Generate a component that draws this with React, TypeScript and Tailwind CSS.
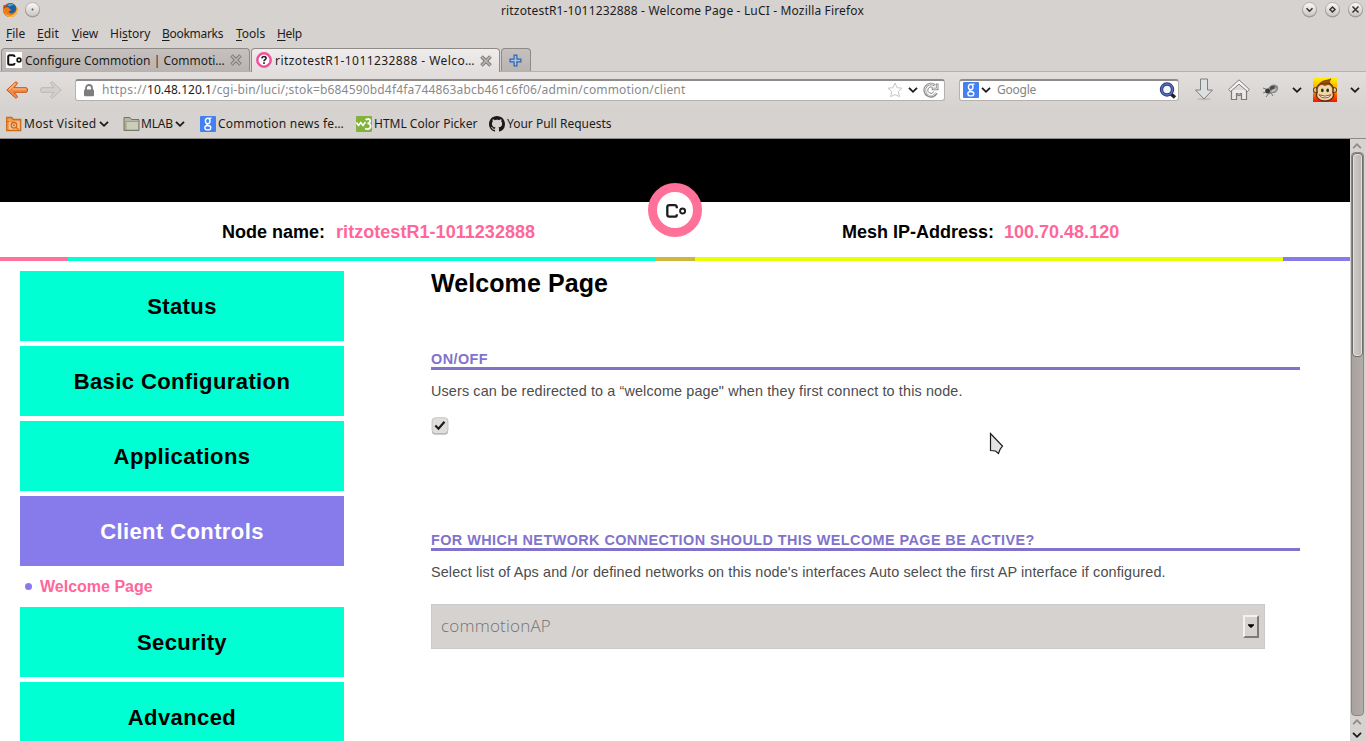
import type { ReactNode } from "react";

const UI = "font-['Noto_Sans',sans-serif] text-[12px] leading-[16px] whitespace-pre text-[#1c1c1c]";

function Chevron({ className = "", color = "#1a1a1a", up = false }: { className?: string; color?: string; up?: boolean }) {
  return (
    <svg className={`shrink-0 ${className}`} width="10" height="8" viewBox="0 0 10 8" fill="none">
      <path d={up ? "M1.2 6.200 5 2.200 8.800 6.200" : "M1 1.800 5 5.800 9 1.800"} stroke={color} strokeWidth="1.8" />
    </svg>
  );
}

function Firefox() {
  return (
    <svg width="16" height="16" viewBox="0 0 16 16" className="mt-px shrink-0">
      <circle cx="8" cy="8" r="7" fill="#e0661a" />
      <circle cx="8.6" cy="6.6" r="5.6" fill="#1f5f9f" />
      <path d="M5 3.5C6.5 1.5 10 1 12 3c-2 0-3 1-4.500 1.500Z" fill="#4aa3d8" />
      <path d="M1.800 2.600C.2 6 .6 10.500 3.500 13.300c3 2.600 8 2.300 10.500-.8 1.800-2.300 2-5.500.8-8-.1 3-1.500 6.500-4.500 6.900-2.500.2-4-1-3.500-2.300 1.500.2 2-.7 2.600-1.300-1.500-.6-2.200-1.400-2.600-2.300l-2.600-.6Z" fill="#ee7a1b" />
      <path d="M14.800 4.500c.6 3-.5 7-4 8.600-3 1.300-6.500.2-8-2.300 1.500 4.200 7 5.300 10.200 2.500 2.300-2 2.900-5.800 1.800-8.800Z" fill="#f9cf3a" />
      <path d="M2 3 1.500 6.500 3.500 6 4.800 4.800Z" fill="#c8421a" />
    </svg>
  );
}

function WinButton({ children }: { children: ReactNode }) {
  return (
    <svg width="17" height="17" viewBox="0 0 17 17" className="shrink-0" fill="none">
      <defs>
        <linearGradient id="wb" x1="0" y1="0" x2="0" y2="1">
          <stop offset="0" stopColor="#fafafa" />
          <stop offset="1" stopColor="#c9c5c3" />
        </linearGradient>
      </defs>
      <circle cx="8.500" cy="9.200" r="7.300" fill="#8f8b89" />
      <circle cx="8.500" cy="8.500" r="7" fill="url(#wb)" stroke="#a09c9a" strokeWidth=".7" />
      {children}
    </svg>
  );
}

function CommotionMark({ className = "" }: { className?: string }) {
  return (
    <svg viewBox="0 0 20 14" className={className} fill="none" stroke="#1c1c1c">
      <path d="M10.800 4.200V3.200Q10.800 1.200 8.800 1.200H3.400Q1.300 1.200 1.300 3.200V10.600Q1.300 12.700 3.400 12.700H8.800Q10.800 12.700 10.800 10.700V10.200" strokeWidth="2.300" />
      <circle cx="16.600" cy="7" r="2.500" strokeWidth="1.900" />
    </svg>
  );
}

function TabMark() {
  return (
    <svg width="15" height="12" viewBox="0 0 15 12" fill="none" stroke="#111">
      <path d="M7.500 3V2.500Q7.500 1.200 6 1.200H2.700Q1.200 1.200 1.200 2.700V9.300Q1.200 10.800 2.700 10.800H6Q7.500 10.800 7.500 9.500V9" strokeWidth="2" />
      <circle cx="12" cy="6" r="1.900" strokeWidth="1.600" />
    </svg>
  );
}

function TabClose() {
  return (
    <svg width="12" height="12" viewBox="0 0 12 12" className="shrink-0">
      <path d="M1.500 1.500 10.500 10.500M10.500 1.500 1.500 10.500" stroke="#7c7976" strokeWidth="3.600" />
      <path d="M1.800 1.800 10.200 10.200M10.200 1.800 1.800 10.200" stroke="#bdb9b6" strokeWidth="1.500" />
    </svg>
  );
}

function GoogleIcon() {
  return (
    <svg width="16" height="16" viewBox="0 0 16 16" className="shrink-0" fill="none">
      <rect width="16" height="16" rx="1" fill="#4480f2" />
      <ellipse cx="7.700" cy="4.900" rx="2.300" ry="2.700" stroke="#fff" strokeWidth="1.400" />
      <path d="M9.300 2.200h2.200M7.500 7.700C6 8.500 7.300 9 8.800 9.600" stroke="#fff" strokeWidth="1.200" />
      <ellipse cx="7.800" cy="11.700" rx="3" ry="2.200" stroke="#fff" strokeWidth="1.300" />
    </svg>
  );
}

function Menu({ name, pos = 0, className }: { name: string; pos?: number; className: string }) {
  return (
    <span className={`${UI} ${className}`}>
      {name.slice(0, pos)}
      <span className="underline decoration-1 underline-offset-2">{name[pos]}</span>
      {name.slice(pos + 1)}
    </span>
  );
}

function TitleBar() {
  return (
    <div className="flex h-[22px] shrink-0 items-start pt-[1px]">
      <div className="flex w-[501px] shrink-0 gap-[6px] pl-[2px]">
        <Firefox />
        <WinButton>
          <circle cx="8.500" cy="8.500" r="1" fill="#555" />
        </WinButton>
      </div>
      <div className={`${UI} mt-[2px] grow tracking-[0.159px]`}>ritzotestR1-1011232888 - Welcome Page - LuCI - Mozilla Firefox</div>
      <div className="flex gap-[6px] pr-[2px]">
        <WinButton>
          <path d="M5.500 7.300 8.500 10.200 11.500 7.300" stroke="#333" strokeWidth="1.500" />
        </WinButton>
        <WinButton>
          <path d="M8.500 6 11 8.500 8.500 11 6 8.500Z" stroke="#333" strokeWidth="1.500" />
        </WinButton>
        <WinButton>
          <path d="M5.500 5.500 11.500 11.500M11.500 5.500 5.500 11.500" stroke="#333" strokeWidth="1.500" />
        </WinButton>
      </div>
    </div>
  );
}

function Tabs() {
  return (
    <div className="flex h-[24px] shrink-0 border-b border-[#b5b1ae] pl-[1px]">
      <div className="flex h-[23px] w-[249px] items-center rounded-t-[4px] border border-b-0 border-[#8e8a88] bg-linear-to-b from-[#c6c1bf] to-[#b9b4b2] pl-[4px]">
        <div className="flex size-4 items-center justify-center bg-white">
          <TabMark />
        </div>
        <span className={`${UI} mt-[2px] ml-[3px] w-[205px]`}>Configure Commotion | Commoti…</span>
        <TabClose />
      </div>
      <div className="-mb-px ml-px flex h-[24px] w-[249px] items-center rounded-t-[4px] border border-b-0 border-[#8e8a88] bg-linear-to-b from-[#efedec] to-[#e2dedd] pl-[4px]">
        <svg width="16" height="16" viewBox="0 0 16 16" className="mb-px shrink-0" fill="none">
          <circle cx="8" cy="8" r="6.700" fill="#fff" stroke="#f0509c" strokeWidth="2.500" />
          <path d="M5.900 6.400C6 3.900 10.200 4 10.100 6.300 10 7.600 8 7.700 8 9.300M8 10.300v1.600" stroke="#222" strokeWidth="1.600" />
        </svg>
        <span className={`${UI} ml-[3px] w-[205px] tracking-[0.429px]`}>ritzotestR1-1011232888 - Welco…</span>
        <TabClose />
      </div>
      <div className="ml-px flex h-[23px] w-[30px] items-center justify-center rounded-t-[4px] border border-b-0 border-[#8e8a88] bg-linear-to-b from-[#c6c1bf] to-[#b9b4b2]">
        <svg width="13" height="13" viewBox="0 0 13 13" className="mr-px">
          <path d="M4.500.5h4v4h4v4h-4v4h-4v-4h-4v-4h4Z" fill="#2f63ad" />
          <path d="M5.700 1.700h1.600v4h4v1.600h-4v4H5.700v-4h-4V5.700h4Z" fill="#a6c6ec" />
        </svg>
      </div>
    </div>
  );
}

function Monkey() {
  return (
    <svg width="24" height="24" viewBox="0 0 24 24" className="shrink-0">
      <defs>
        <linearGradient id="mk" x1="0" y1="0" x2="0" y2="1">
          <stop offset="0" stopColor="#fff200" />
          <stop offset=".5" stopColor="#ff9b00" />
          <stop offset="1" stopColor="#f01400" />
        </linearGradient>
      </defs>
      <rect width="24" height="24" fill="url(#mk)" />
      <circle cx="2.800" cy="12" r="2.500" fill="#e8c084" stroke="#3a1c08" strokeWidth=".8" />
      <circle cx="21.200" cy="12" r="2.500" fill="#e8c084" stroke="#3a1c08" strokeWidth=".8" />
      <path d="M4 14C2.500 8 6 4.500 12 4.500s9.500 3 8 9.500c3 5-2 9-8 9S1.500 19 4 14Z" fill="#8a5222" stroke="#3a1c08" strokeWidth=".8" />
      <path d="M5 14.500C4 9 6.500 7 9 7c1.500 0 2 1 3 1s1.500-1 3-1c2.500 0 5 2 4 7.500 2.500 4.500-2 7.700-7 7.700s-9.500-3.200-7-7.700Z" fill="#f2d7a2" />
      <path d="M7 5.500C9 2 13 3 18 .8 17 3 16 3 17 5.500Z" fill="#a04a10" stroke="#5a2408" strokeWidth=".5" />
      <ellipse cx="9.300" cy="12.300" rx="1.300" ry="1.900" fill="#14303a" />
      <ellipse cx="14.700" cy="12.300" rx="1.300" ry="1.900" fill="#14303a" />
      <path d="M6 16.700q6 3 12 0-1.500 3.300-6 3.300t-6-3.300Z" fill="#fff" stroke="#8a2c14" strokeWidth=".8" />
    </svg>
  );
}

function NavBar() {
  return (
    <div className="flex h-[37px] shrink-0 items-center bg-linear-to-b from-[#e2dedd] to-[#d6d2cf] pb-[2px]">
      <svg width="22" height="18" viewBox="0 0 22 18" className="ml-[6px] shrink-0">
        <path d="M9.500 1Q11 .5 11.500 2.500L8 6.700H20Q21.500 6.700 21.500 9T20 11.300H8l3.500 4.200Q11 17.500 9.500 17L.8 9Z" fill="#ef8b47" stroke="#c95612" />
        <path d="M3 8.800 9.500 2.500M7 8H20" stroke="#f9bb8b" strokeWidth="1.200" />
      </svg>
      <svg width="22" height="18" viewBox="0 0 22 18" className="ml-[12px] shrink-0">
        <path d="M12.500 1Q11 .5 10.500 2.500L14 6.700H2Q.5 6.700 .5 9T2 11.300H14l-3.500 4.200Q11 17.500 12.500 17L21.200 9Z" fill="#d3cfcc" stroke="#bbb7b4" />
      </svg>
      <div className="ml-[13px] flex h-[22px] w-[870px] shrink-0 items-center rounded-[3px] border border-t-2 border-[#b5b1ae] border-t-[#8f8b89] bg-white pl-[7px]">
        <svg width="12" height="13" viewBox="0 0 12 13" className="shrink-0" fill="none">
          <path d="M3 6V4a3 3 0 0 1 6 0v2" stroke="#7d7d7d" strokeWidth="1.800" />
          <rect x="1" y="5.500" width="10" height="6.800" rx="1" fill="#7d7d7d" />
        </svg>
        <span className={`${UI} ml-[7px]`}>
          <span className="tracking-[0.455px] text-[#8a8a8a]">https://</span>
          <span className="tracking-[0.04px]">10.48.120.1</span>
          <span className="tracking-[0.17px] text-[#8a8a8a]">/cgi-bin/luci/;stok=b684590bd4f4fa744863abcb461c6f06/admin/commotion/client</span>
        </span>
        <svg width="16" height="16" viewBox="0 0 16 16" className="ml-auto shrink-0" fill="none">
          <path d="m8 1 2.100 4.700 5 .5-3.800 3.400 1.100 5L8 12.600l-4.400 2 1.100-5L.9 6.200l5-.5Z" stroke="#c6c6c6" strokeLinejoin="round" />
        </svg>
        <Chevron className="ml-[5px]" />
        <svg width="16" height="16" viewBox="0 0 16 16" className="ml-[5px] mr-[5px] shrink-0" fill="none">
          <path d="M13.500 11A6.200 6.200 0 1 1 12 3.500M14.200 1.500V7H8.700" stroke="#858585" strokeWidth="2.600" />
          <path d="M13.200 10.900A6 6 0 1 1 12.300 3.800M14.200 2.300V6.900H9.500" stroke="#ededed" strokeWidth="1" />
          <path d="M10.800 9.600A3.200 3.200 0 1 1 9.500 5.300" stroke="#858585" strokeWidth="1" />
        </svg>
      </div>
      <div className="ml-[14px] flex h-[22px] w-[220px] shrink-0 items-center rounded-[3px] border border-t-2 border-[#b5b1ae] border-t-[#8f8b89] bg-white pl-[3px]">
        <GoogleIcon />
        <Chevron className="ml-[2px]" />
        <span className={`${UI} ml-[6px] tracking-[-0.25px] text-[#858585]`}>Google</span>
        <svg width="18" height="17" viewBox="0 0 18 17" className="ml-auto mr-px shrink-0" fill="none">
          <path d="m11.500 11.500 4.500 4" stroke="#222" strokeWidth="3.500" />
          <circle cx="8" cy="7.500" r="5.500" fill="#f5f6fa" stroke="#27397d" strokeWidth="3.400" />
          <circle cx="8" cy="7.500" r="5.500" stroke="#5c72be" strokeWidth="1.400" />
        </svg>
      </div>
      <svg width="20" height="23" viewBox="0 0 20 23" className="ml-[15px] shrink-0">
        <ellipse cx="10" cy="21.200" rx="7" ry="1.300" fill="#c2bebb" />
        <path d="M6.500 1h7v11h5L10 21 1.500 12h5Z" fill="#dce0e1" stroke="#7b7f7e" />
      </svg>
      <svg width="22" height="22" viewBox="0 0 22 22" className="ml-[14px] shrink-0" fill="none">
        <path d="M3.500 11v9.500h5v-6h1.500v2h2v-2h1.500v6h5V11" fill="#eceae9" stroke="#7d7b79" strokeWidth="1.200" />
        <path d="M11 .8 21.300 10.500 19.500 12.500 11 5.200 2.500 12.500.7 10.500Z" fill="#f4f3f2" stroke="#7d7b79" strokeWidth="1" />
      </svg>
      <svg width="18" height="16" viewBox="0 0 18 16" className="ml-[12px] shrink-0">
        <path d="M4 9 8 4Q13 1 16 4.500 17 9 12 11L7 12Z" fill="#8b8b8b" />
        <path d="M8 5q3-2 5-1l-1 3-4 1Z" fill="#4b4b4b" />
        <path d="M10 8 15 6l-2 3-4 1.500Z" fill="#c2c2c2" />
        <circle cx="5.500" cy="9" r="2.500" fill="#3a3a3a" />
        <path d="M4 7 1 6M4 10l-3 1M7 11l-3 4M9 11l2 3" stroke="#777" />
      </svg>
      <Chevron className="ml-[12px]" />
      <div className="ml-[11px]">
        <Monkey />
      </div>
      <Chevron className="ml-[13px]" />
    </div>
  );
}

function Bookmarks() {
  return (
    <div className="flex h-[30px] shrink-0 items-center border-b border-[#8f8b89] bg-[#d6d2cf] pl-[6px]">
      <svg width="16" height="16" viewBox="0 0 16 16" className="shrink-0" fill="none">
        <path d="M.7 14.500V1.500h5l1.500 2h7.500v11Z" fill="#f0a05a" stroke="#cf6a14" strokeWidth="1.300" />
        <path d="M1 5.500h7" stroke="#cf6a14" />
        <rect x="3" y="5.500" width="10.500" height="8" fill="#f7c595" />
        <circle cx="8" cy="9.300" r="2.800" stroke="#cf6a14" strokeWidth="1.300" />
        <circle cx="8" cy="9.300" r="1" fill="#cf6a14" />
        <path d="m10 11.300 2.500 2.200" stroke="#cf6a14" strokeWidth="1.300" />
      </svg>
      <span className={`${UI} mt-px ml-[2px] w-[75px] tracking-[0.29px]`}>Most Visited</span>
      <Chevron />
      <svg width="17" height="16" viewBox="0 0 17 16" className="ml-[14px] shrink-0">
        <path d="M1 14.500V1.500h6l1.500 2h7.500v11Z" fill="#b5b7a3" stroke="#72745f" />
        <path d="M3 14V5.500h12.500V14Z" fill="#cbcdbb" stroke="#8b8d78" strokeWidth=".7" />
      </svg>
      <span className={`${UI} mt-px ml-[1px] w-[34px] tracking-[-0.16px]`}>MLAB</span>
      <Chevron />
      <div className="ml-[15px]">
        <GoogleIcon />
      </div>
      <span className={`${UI} mt-px ml-[2px] w-[138px] tracking-[0.2px]`}>Commotion news fe…</span>
      <svg width="16" height="16" viewBox="0 0 16 16" className="shrink-0" fill="none">
        <rect width="16" height="16" rx="1" fill="#82b23c" />
        <path d="M.5 6.500 2.500 9.500 4.800 6.500 7 9.500 9.500 6" stroke="#fff" strokeWidth="1.600" />
        <path d="M9.500 3.800Q13.800 1.800 14.200 4.800 14 7.200 11.500 7.400 15 7.800 14.600 10.800 13.500 14.200 9 12.500" stroke="#fff" strokeWidth="1.800" />
      </svg>
      <span className={`${UI} mt-px ml-[2px] w-[115px]`}>HTML Color Picker</span>
      <svg width="16" height="16" viewBox="0 0 16 16" className="shrink-0">
        <path fill="#1b1817" d="M8 0C3.580 0 0 3.580 0 8c0 3.540 2.290 6.530 5.470 7.590.4.070.55-.17.55-.38v-1.490c-2.010.37-2.530-.49-2.690-.94-.09-.23-.48-.94-.82-1.130-.28-.15-.68-.52-.01-.53.63-.01 1.080.58 1.230.82.72 1.210 1.870.87 2.330.66.07-.52.28-.87.51-1.070-1.780-.2-3.640-.89-3.640-3.950 0-.87.31-1.590.82-2.150-.08-.2-.36-1.020.08-2.120 0 0 .67-.21 2.200.82.640-.18 1.320-.27 2-.27s1.360.09 2 .27c1.530-1.040 2.200-.82 2.200-.82.44 1.100.16 1.920.08 2.120.51.56.82 1.270.82 2.150 0 3.070-1.870 3.750-3.650 3.950.29.25.54.73.54 1.480v2.200c0 .21.15.46.55.38A8 8 0 0 0 16 8c0-4.420-3.580-8-8-8Z" />
      </svg>
      <span className={`${UI} mt-px ml-[2px]`}>Your Pull Requests</span>
    </div>
  );
}

function NavBlock({ label, active = false }: { label: string; active?: boolean }) {
  return (
    <a className={`flex h-[70px] shrink-0 items-center justify-center pt-[2px] text-[22px] leading-[26px] tracking-[0.4px] ${active ? "bg-[#877bec] text-white" : "bg-[#00ffd2] text-black"}`}>
      {label}
    </a>
  );
}

function Header() {
  return (
    <header className="relative shrink-0 text-[18px] leading-[22px] font-bold">
      <div className="h-[63px] bg-black" />
      <div className="flex h-[55px] pt-[19px]">
        <div className="flex w-[842px] gap-[11px] pl-[222px]">
          <span>Node name:</span>
          <span className="tracking-[0.045px] text-[#ff6699]">ritzotestR1-1011232888</span>
        </div>
        <div className="flex gap-[10px]">
          <span>Mesh IP-Address:</span>
          <span className="text-[#ff6699]">100.70.48.120</span>
        </div>
      </div>
      <div className="flex h-[4px]">
        <div className="w-[68px] bg-[#ff7198]" />
        <div className="w-[587px] bg-[#00ffd2]" />
        <div className="w-[40px] bg-[#cbb83c]" />
        <div className="w-[588px] bg-[#e8ff00]" />
        <div className="grow bg-[#877bec]" />
      </div>
      <div className="absolute top-[44px] left-[648px] flex size-[54px] items-center justify-center rounded-full border-[9px] border-[#ff7198] bg-white">
        <CommotionMark className="mt-[2px] ml-px w-[20px]" />
      </div>
    </header>
  );
}

function SectionTitle({ children }: { children: ReactNode }) {
  return <h3 className="h-[20px] border-b-[3px] border-[#8173cc] pt-px text-[14.4px] leading-[17px] font-bold whitespace-nowrap text-[#8173cc]">{children}</h3>;
}

function Page() {
  return (
    <div className="flex w-[1350px] shrink-0 flex-col overflow-hidden bg-white font-['Liberation_Sans',sans-serif] text-black">
      <Header />
      <div className="flex min-h-0 grow">
        <nav className="ml-[20px] flex w-[324px] shrink-0 flex-col gap-[5px] overflow-hidden pt-[10px] font-bold">
          <NavBlock label="Status" />
          <NavBlock label="Basic Configuration" />
          <NavBlock label="Applications" />
          <NavBlock label="Client Controls" active />
          <div className="flex h-[31px] shrink-0 items-center pl-[5px] text-[16px] leading-[20px] text-[#ff6699]">
            <span className="mr-[8px] size-[7px] rounded-full bg-[#877bec]" />
            Welcome Page
          </div>
          <NavBlock label="Security" />
          <NavBlock label="Advanced" />
        </nav>
        <main className="ml-[87px] w-[869px] overflow-hidden">
          <h2 className="mt-[7px] text-[25px] leading-[30px] font-bold tracking-[0.08px]">Welcome Page</h2>
          <section className="mt-[52px]">
            <SectionTitle>
              <span className="tracking-[0.44px]">ON/OFF</span>
            </SectionTitle>
            <p className="mt-[11px] text-[14.4px] leading-[20px] tracking-[0.13px] whitespace-nowrap text-[#4c4c4c]">Users can be redirected to a “welcome page" when they first connect to this node.</p>
            <svg width="18" height="18" viewBox="0 0 18 18" className="mt-[16px]" fill="none">
              <rect x="1" y="1.500" width="16" height="16" rx="3.500" fill="#999593" />
              <rect x="1" y=".7" width="16" height="15.800" rx="3.500" fill="#e0dedd" stroke="#bfbcba" strokeWidth=".8" />
              <path d="M4.300 8.500 7.500 11.700 13.500 4.800" stroke="#1c1c1c" strokeWidth="2.200" />
            </svg>
          </section>
          <section className="mt-[96px]">
            <SectionTitle>
              <span className="tracking-[0.44px]">FOR WHICH NETWORK CONNECTION SHOULD THIS WELCOME PAGE BE ACTIVE?</span>
            </SectionTitle>
            <p className="mt-[11px] text-[14.4px] leading-[20px] tracking-[0.13px] whitespace-nowrap text-[#4c4c4c]">
              Select list of Aps and /or defined networks on this node's interfaces Auto select the first AP interface if configured.
            </p>
            <div className="mt-[22px] flex h-[45px] w-[834px] items-center border border-[#cacaca] bg-[#d6d2cf] pr-[5px] pl-[9px]">
              <span className="mb-[2px] grow font-['Open_Sans',sans-serif] text-[17px] leading-[22px] font-light tracking-[0.2px] text-[#747474]">commotionAP</span>
              <div className="flex h-[23px] w-[16px] items-center justify-center border-2 border-t-[#f4f2f1] border-r-[#7d7a78] border-b-[#7d7a78] border-l-[#f4f2f1]">
                <svg width="6" height="4" viewBox="0 0 7 4" className="mb-[2px]">
                  <path d="M0 0H7V1L4 4H3L0 1Z" />
                </svg>
              </div>
            </div>
          </section>
        </main>
      </div>
    </div>
  );
}

function Scrollbar() {
  return (
    <div className="flex grow flex-col bg-[#d6d2cf]">
      <div className="flex h-[13px] items-center pl-[2px]">
        <Chevron up color="#8d8987" />
      </div>
      <div className="mr-[2px] ml-px h-[564px] rounded-[4px] border border-[#8b8785] bg-linear-to-r from-[#a8a19e] to-[#b3aba8]">
        <div className="h-[204px] rounded-[4px] border border-[#6f6c6a] bg-linear-to-r from-[#d0ccca] to-[#b9b5b3] inset-ring inset-ring-[#e3e0de]" />
      </div>
      <div className="flex grow flex-col gap-[5px] pt-[2px] pl-[2px]">
        <Chevron up color="#8d8987" />
        <Chevron />
      </div>
    </div>
  );
}

export default function App() {
  return (
    <div className="relative flex h-[741px] w-[1366px] flex-col overflow-hidden bg-[#d6d2cf]">
      <TitleBar />
      <div className="flex h-[26px] shrink-0 pt-[4px] pl-[6px]">
        <Menu name="File" className="w-[31px]" />
        <Menu name="Edit" className="w-[35px] tracking-[0.1px]" />
        <Menu name="View" className="w-[38px]" />
        <Menu name="History" pos={2} className="w-[52px]" />
        <Menu name="Bookmarks" className="w-[74px] tracking-[-0.3px]" />
        <Menu name="Tools" className="w-[41px]" />
        <Menu name="Help" className="w-[30px] tracking-[-0.35px]" />
      </div>
      <Tabs />
      <NavBar />
      <Bookmarks />
      <div className="flex min-h-0 grow">
        <Page />
        <Scrollbar />
      </div>
      <svg width="16" height="24" viewBox="0 0 16 24" className="absolute top-[432px] left-[989px]">
        <path d="M1.500 1.500V18.500L6.500 19 9.500 21.500 11 17.500 13.500 14Z" fill="#e3e3e3" stroke="#1a1a1a" strokeWidth="1.200" />
      </svg>
    </div>
  );
}
